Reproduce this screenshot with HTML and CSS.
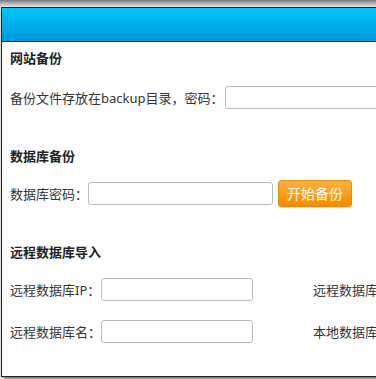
FILE: index.html
```html
<!DOCTYPE html>
<html lang="zh-CN">

<head>
    <meta charset="UTF-8">
    <meta name="viewport" content="width=device-width, initial-scale=1.0">
    <title>备份</title>
    <link rel="stylesheet" href="styles.css">
</head>

<body>
    <div class="topShade"></div>
    <div class="dialog">
        <div class="dialogHead"></div>
        <div class="dialogBody">
            <h3 class="title first">网站备份</h3>
            <div class="row">
                <label for="sitePwd">备份文件存放在backup目录，密码：</label>
                <input type="password" id="sitePwd" class="txt wide">
            </div>

            <h3 class="title">数据库备份</h3>
            <div class="row">
                <label for="dbPwd">数据库密码：</label>
                <input type="password" id="dbPwd" class="txt mid">
                <button class="btn">开始备份</button>
            </div>

            <h3 class="title">远程数据库导入</h3>
            <div class="row grid">
                <label for="remoteIp" class="lbl">远程数据库IP：</label>
                <input type="text" id="remoteIp" class="txt short">
                <label class="lbl right">远程数据库用户名：</label>
            </div>
            <div class="row grid next">
                <label for="remoteName" class="lbl">远程数据库名：</label>
                <input type="text" id="remoteName" class="txt short">
                <label class="lbl right">本地数据库名：</label>
            </div>
        </div>
    </div>
</body>

</html>
```

FILE: styles.css
```css
* {
    margin: 0;
    padding: 0;
    box-sizing: border-box;
}
body {
    background-color: #efefef;
    font-family: "Noto Sans", "Noto Sans CJK SC", sans-serif;
    font-size: 13px;
    color: #333;
    overflow: hidden;
    height: 379px;
}
.topShade {
    height: 7px;
    background: linear-gradient(#7a7a7a, #ececec);
}
.dialog {
    margin-left: 1px;
    width: 640px;
    border: 1px solid #222;
    background-color: #fff;
    box-shadow: 2px 3px 4px rgba(0, 0, 0, 0.5);
}
.dialogHead {
    height: 34px;
    background: linear-gradient(#00c6ff, #0098da);
    border-bottom: 1px solid #222;
}
.dialogBody {
    height: 328px;
    padding-left: 8px;
}
.title {
    font-size: 13px;
    font-weight: bold;
    color: #222;
    line-height: 20px;
    margin-top: 34px;
    margin-bottom: 12px;
}
.title.first {
    margin-top: 6px;
    margin-bottom: 14px;
}
.row {
    display: flex;
    align-items: center;
    height: 30px;
    white-space: nowrap;
}
.txt {
    height: 23px;
    border: 1px solid #bbb;
    border-radius: 3px;
    background-color: #fff;
    outline: none;
}
.wide {
    width: 300px;
    margin-left: 1px;
}
.mid {
    width: 185px;
}
.short {
    width: 152px;
}
.btn {
    margin-left: 5px;
    width: 74px;
    height: 27px;
    border: 1px solid #e58a0c;
    border-radius: 3px;
    background: linear-gradient(#ffb040, #f28c00);
    color: #fff;
    font-family: "Noto Sans", "Noto Sans CJK SC", sans-serif;
    font-size: 14px;
    box-shadow: 0 1px 1px rgba(0, 0, 0, 0.15);
}
.lbl {
    width: 91px;
}
.lbl.right {
    width: auto;
    margin-left: 60px;
}
.row.next {
    margin-top: 12px;
}
```
